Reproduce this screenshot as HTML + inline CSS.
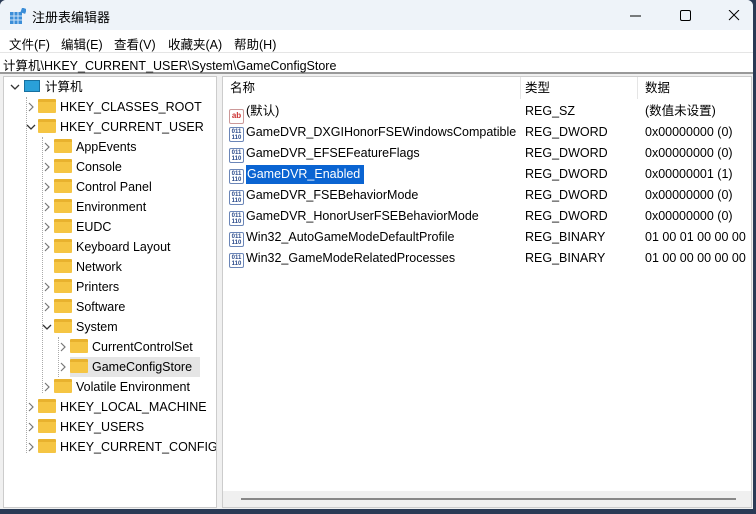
<!DOCTYPE html><html><head><meta charset="utf-8"><style>
*{margin:0;padding:0;box-sizing:border-box}
body{width:756px;height:514px;overflow:hidden;background:#2a3a55;font-family:"Liberation Sans","Noto Sans CJK SC",sans-serif;font-size:12.5px;color:#000;position:relative}
.win{position:absolute;left:0;top:0;width:753px;height:509px;background:#f0f0f0;border-radius:6px 6px 0 0;overflow:hidden}
.title{position:absolute;left:0;top:0;width:100%;height:30px;background:#eef3f9}
.title span{position:absolute;left:32px;top:7px;font-size:13px}
.menu{position:absolute;top:30px;height:22px;left:0;width:100%;background:#fff}
.menu span{position:absolute;top:4px}
.addr{position:absolute;top:52px;height:22px;left:0;width:100%;background:#fff;border-top:1px solid #e5e5e5;border-bottom:2px solid #999}
.addr span{position:absolute;left:3px;top:2px}
.tree{position:absolute;left:3px;top:76px;width:214px;height:432px;background:#fff;border:1px solid #ccc;overflow:hidden}
.list{position:absolute;left:222px;top:76px;width:530px;height:432px;background:#fff;border:1px solid #ccc;overflow:hidden}
.t{position:absolute;height:20px;line-height:20px;white-space:nowrap}
.f{display:inline-block;width:18px;height:14px;background:#f5c543;border-radius:1px;vertical-align:-2px;margin-right:4px;position:relative;border-top:3px solid #e8b22e}
.ch{position:absolute;width:10px;height:20px}
.r{position:absolute;height:21px;line-height:21px;white-space:nowrap}
.ic{display:inline-block;width:15px;height:15px;border:1px solid #6b86b8;border-radius:2px;vertical-align:-3px;margin-right:2px;font-size:6px;line-height:6px;color:#2a4a8a;text-align:center;font-weight:bold;padding-top:1px}
.dot{position:absolute;border-left:1px dotted #aaa}
</style></head><body><div class="win">
<div class="title">
<svg style="position:absolute;left:10px;top:8px" width="16" height="16"><rect x="0" y="4" width="12" height="12" fill="#3c8ed8"/><path d="M0 8h12M0 12h12M4 4v12M8 4v12" stroke="#cfe4f7" stroke-width="1"/><rect x="11" y="0" width="5" height="5" fill="#3c8ed8" transform="rotate(20 13 3)"/></svg>
<span>注册表编辑器</span>
<svg style="position:absolute;left:630px;top:10px" width="110" height="12"><path d="M0 6h11" stroke="#000"/><rect x="50.5" y="0.5" width="10" height="10" rx="1.5" fill="none" stroke="#000"/><path d="M99 0l10 10M109 0l-10 10" stroke="#000"/></svg>
</div>
<div class="menu"><span style="left:9px">文件(F)</span><span style="left:61px">编辑(E)</span><span style="left:114px">查看(V)</span><span style="left:168px">收藏夹(A)</span><span style="left:234px">帮助(H)</span></div>
<div class="addr"><span>计算机\HKEY_CURRENT_USER\System\GameConfigStore</span></div>
<svg width="0" height="0" style="position:absolute"><defs>
<symbol id="cr" viewBox="0 0 10 20"><path d="M3 6l4 4-4 4" fill="none" stroke="#777" stroke-width="1.2"/></symbol>
<symbol id="cd" viewBox="0 0 10 20"><path d="M1 8l4 4 4-4" fill="none" stroke="#333" stroke-width="1.3"/></symbol>
</defs></svg>
<div class="tree">
<div class="dot" style="left:22px;top:20px;height:356px"></div>
<div class="dot" style="left:38px;top:60px;height:256px"></div>
<div class="dot" style="left:54px;top:260px;height:40px"></div>
<svg class="ch" style="left:6px;top:0"><use href="#cd"/></svg>
<div class="t" style="left:20px;top:0"><span style="display:inline-block;width:16px;height:12px;background:#2aa0d8;border:1px solid #17709f;vertical-align:-1px;margin-right:5px"></span>计算机</div>
<svg class="ch" style="left:22px;top:20px"><use href="#cr"/></svg><div class="t" style="left:34px;top:20px"><i class="f"></i>HKEY_CLASSES_ROOT</div>
<svg class="ch" style="left:22px;top:40px"><use href="#cd"/></svg><div class="t" style="left:34px;top:40px"><i class="f"></i>HKEY_CURRENT_USER</div>
<svg class="ch" style="left:38px;top:60px"><use href="#cr"/></svg><div class="t" style="left:50px;top:60px"><i class="f"></i>AppEvents</div>
<svg class="ch" style="left:38px;top:80px"><use href="#cr"/></svg><div class="t" style="left:50px;top:80px"><i class="f"></i>Console</div>
<svg class="ch" style="left:38px;top:100px"><use href="#cr"/></svg><div class="t" style="left:50px;top:100px"><i class="f"></i>Control Panel</div>
<svg class="ch" style="left:38px;top:120px"><use href="#cr"/></svg><div class="t" style="left:50px;top:120px"><i class="f"></i>Environment</div>
<svg class="ch" style="left:38px;top:140px"><use href="#cr"/></svg><div class="t" style="left:50px;top:140px"><i class="f"></i>EUDC</div>
<svg class="ch" style="left:38px;top:160px"><use href="#cr"/></svg><div class="t" style="left:50px;top:160px"><i class="f"></i>Keyboard Layout</div>
<div class="t" style="left:50px;top:180px"><i class="f"></i>Network</div>
<svg class="ch" style="left:38px;top:200px"><use href="#cr"/></svg><div class="t" style="left:50px;top:200px"><i class="f"></i>Printers</div>
<svg class="ch" style="left:38px;top:220px"><use href="#cr"/></svg><div class="t" style="left:50px;top:220px"><i class="f"></i>Software</div>
<svg class="ch" style="left:38px;top:240px"><use href="#cd"/></svg><div class="t" style="left:50px;top:240px"><i class="f"></i>System</div>
<svg class="ch" style="left:54px;top:260px"><use href="#cr"/></svg><div class="t" style="left:66px;top:260px"><i class="f"></i>CurrentControlSet</div>
<svg class="ch" style="left:54px;top:280px"><use href="#cr"/></svg><div class="t" style="left:66px;top:280px;background:#e5e5e5;width:130px"><i class="f"></i>GameConfigStore</div>
<svg class="ch" style="left:38px;top:300px"><use href="#cr"/></svg><div class="t" style="left:50px;top:300px"><i class="f"></i>Volatile Environment</div>
<svg class="ch" style="left:22px;top:320px"><use href="#cr"/></svg><div class="t" style="left:34px;top:320px"><i class="f"></i>HKEY_LOCAL_MACHINE</div>
<svg class="ch" style="left:22px;top:340px"><use href="#cr"/></svg><div class="t" style="left:34px;top:340px"><i class="f"></i>HKEY_USERS</div>
<svg class="ch" style="left:22px;top:360px"><use href="#cr"/></svg><div class="t" style="left:34px;top:360px"><i class="f"></i>HKEY_CURRENT_CONFIG</div>
</div>
<div class="list">
<div style="position:absolute;left:297px;top:0;height:22px;border-left:1px solid #e5e5e5"></div>
<div style="position:absolute;left:414px;top:0;height:22px;border-left:1px solid #e5e5e5"></div>
<div class="r" style="left:7px;top:1px">名称</div><div class="r" style="left:302px;top:1px">类型</div><div class="r" style="left:422px;top:1px">数据</div>
<div class="r" style="left:6px;top:24px"><span class="ic" style="color:#c33;border-color:#c99;font-size:8px;line-height:11px;padding-top:0">ab</span>(默认)</div><div class="r" style="left:302px;top:24px">REG_SZ</div><div class="r" style="left:422px;top:24px">(数值未设置)</div>
<div class="r" style="left:6px;top:45px"><span class="ic">011<br>110</span>GameDVR_DXGIHonorFSEWindowsCompatible</div><div class="r" style="left:302px;top:45px">REG_DWORD</div><div class="r" style="left:422px;top:45px">0x00000000 (0)</div>
<div class="r" style="left:6px;top:66px"><span class="ic">011<br>110</span>GameDVR_EFSEFeatureFlags</div><div class="r" style="left:302px;top:66px">REG_DWORD</div><div class="r" style="left:422px;top:66px">0x00000000 (0)</div>
<div class="r" style="left:6px;top:87px"><span class="ic">011<br>110</span><span style="background:#0a64d2;color:#fff;padding:0 4px 0 1px;display:inline-block;line-height:19px">GameDVR_Enabled</span></div><div class="r" style="left:302px;top:87px">REG_DWORD</div><div class="r" style="left:422px;top:87px">0x00000001 (1)</div>
<div class="r" style="left:6px;top:108px"><span class="ic">011<br>110</span>GameDVR_FSEBehaviorMode</div><div class="r" style="left:302px;top:108px">REG_DWORD</div><div class="r" style="left:422px;top:108px">0x00000000 (0)</div>
<div class="r" style="left:6px;top:129px"><span class="ic">011<br>110</span>GameDVR_HonorUserFSEBehaviorMode</div><div class="r" style="left:302px;top:129px">REG_DWORD</div><div class="r" style="left:422px;top:129px">0x00000000 (0)</div>
<div class="r" style="left:6px;top:150px"><span class="ic">011<br>110</span>Win32_AutoGameModeDefaultProfile</div><div class="r" style="left:302px;top:150px">REG_BINARY</div><div class="r" style="left:422px;top:150px">01 00 01 00 00 00</div>
<div class="r" style="left:6px;top:171px"><span class="ic">011<br>110</span>Win32_GameModeRelatedProcesses</div><div class="r" style="left:302px;top:171px">REG_BINARY</div><div class="r" style="left:422px;top:171px">01 00 00 00 00 00</div>
<div style="position:absolute;left:0;top:414px;width:528px;height:16px;background:#f0f0f0"></div>
<div style="position:absolute;left:18px;top:421px;width:495px;height:2px;background:#888"></div>
</div>
</div></body></html>
